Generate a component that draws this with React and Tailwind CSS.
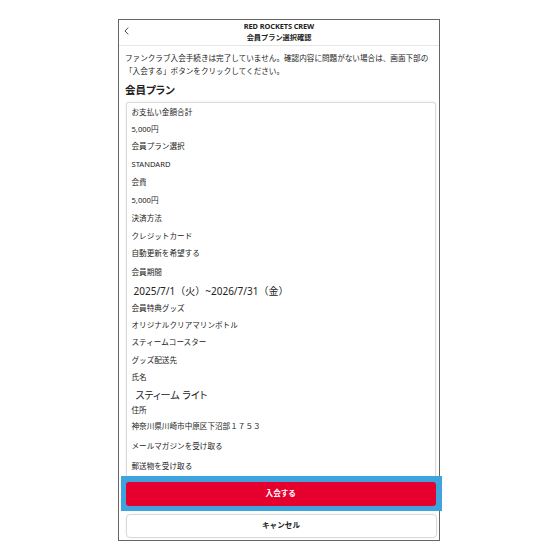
import React from "react";

const rows = [
  ["お支払い金額合計", 17],
  ["5,000円", 17],
  ["会員プラン選択", 18],
  ["STANDARD", 18],
  ["会費", 18],
  ["5,000円", 18],
  ["決済方法", 18],
  ["クレジットカード", 17],
  ["自動更新を希望する", 18],
  ["会員期間", 19],
  ["2025/7/1（火）~2026/7/31（金）", 18, "big"],
  ["会員特典グッズ", 17],
  ["オリジナルクリアマリンボトル", 17],
  ["スティームコースター", 18],
  ["グッズ配送先", 18],
  ["氏名", 16],
  ["スティーム ライト", 17, "name"],
  ["住所", 15],
  ["神奈川県川崎市中原区下沼部１７５３", 18],
  ["メールマガジンを受け取る", 21],
  ["郵送物を受け取る", 20],
];

export default function App() {
  const font = { fontFamily: '"Noto Sans", "Noto Sans CJK JP", sans-serif' };
  return (
    <div className="w-[560px] h-[560px] bg-white pt-[19px] pl-[118px]" style={font}>
      <div className="w-[322px] h-[522px] border-[1.5px] border-[#666] flex flex-col bg-white">
        {/* header */}
        <div className="h-[25.5px] shrink-0 border-b border-[#e6e6e6] grid grid-cols-[22px_1fr_22px] items-start">
          <div className="pt-[7px] pl-[5px]">
            <svg width="5" height="8" viewBox="0 0 5 8" fill="none">
              <path d="M4.2 0.6 L1 4 L4.2 7.4" stroke="#333" strokeWidth="0.9" />
            </svg>
          </div>
          <div className="flex flex-col items-center pt-[1px] text-[#222] font-bold">
            <div className="text-[7.4px] leading-[11px] tracking-[-0.1px]">RED ROCKETS CREW</div>
            <div className="text-[7.2px] leading-[11px]">会員プラン選択確認</div>
          </div>
          <div />
        </div>

        {/* main */}
        <div className="flex-1 min-h-0 overflow-hidden pl-[6px] pr-[3px] pt-[6.5px] text-[#222]">
          <div className="text-[7.6px] leading-[13px] whitespace-nowrap">
            ファンクラブ入会手続きは完了していません。確認内容に問題がない場合は、画面下部の
            <br />
            「入会する」ボタンをクリックしてください。
          </div>
          <div className="mt-[3.5px] text-[10.5px] leading-[16px] font-bold text-[#222] [font-feature-settings:'palt']">
            会員プラン
          </div>
          <div className="mt-[4px] ml-[0.5px] border border-b-0 border-[#dcdcdc] rounded-t-[3px] shadow-[0_0_2px_rgba(0,0,0,0.12)] pl-[5px] pt-[1.5px]">
            {rows.map(([t, h, kind], i) => (
              <div
                key={i}
                className="flex items-center whitespace-nowrap"
                style={{ height: h }}
              >
                {kind === "big" ? (
                  <span className="text-[10px] leading-none pl-[2px]">{t}</span>
                ) : kind === "name" ? (
                  <span className="text-[10px] leading-none pl-[4px] [font-feature-settings:'palt']">{t}</span>
                ) : (
                  <span className="text-[7.6px] leading-none">{t}</span>
                )}
              </div>
            ))}
          </div>
        </div>

        {/* footer */}
        <div className="shrink-0 pb-[2.5px]">
          <div className="ml-[1.5px] mr-[-3px] bg-[#3fa3de] pt-[6px] pb-[5px] pl-[5px] pr-[6px]">
            <div className="h-[24px] rounded-[3px] bg-[#e6002d] flex items-center justify-center text-white font-bold text-[7.6px]">
              入会する
            </div>
          </div>
          <div className="mt-[3px] ml-[6.5px] mr-[2.5px] h-[24px] rounded-[4px] border border-[#d9d9d9] shadow-[0_0_2px_rgba(0,0,0,0.08)] flex items-center justify-center font-bold text-[7.6px] text-[#222]">
            キャンセル
          </div>
        </div>
      </div>
    </div>
  );
}
